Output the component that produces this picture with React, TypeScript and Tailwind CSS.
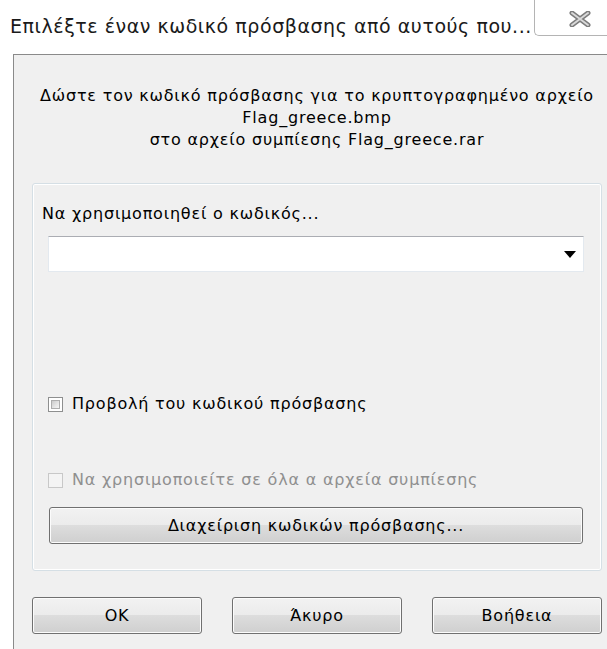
import React from 'react';

const ui = { fontFamily: '"DejaVu Sans", "Liberation Sans", sans-serif' };

const btnFace =
  'border border-[#707070] rounded-[3px] bg-[linear-gradient(to_bottom,#f2f2f2_0%,#ebebeb_50%,#dddddd_50%,#cfcfcf_100%)] shadow-[inset_0_0_0_1px_#fcfcfc] text-[16px] tracking-[0.8px] text-black flex items-center justify-center';

function CloseTab() {
  return (
    <div className="w-[73px] h-[36px] border-l border-b border-[#b4b4b4] rounded-bl-[5px] bg-white flex items-center justify-start pl-[34px] pt-[2px]">
      <svg width="22" height="16" viewBox="0 0 22 16">
        <path d="M3 2 L19 14 M19 2 L3 14" stroke="#7d7d7d" strokeWidth="5" strokeLinecap="round" />
        <path d="M3 2 L19 14 M19 2 L3 14" stroke="#d9d9d9" strokeWidth="2" strokeLinecap="round" />
      </svg>
    </div>
  );
}

function Checkbox({ label, disabled }: { label: string; disabled?: boolean }) {
  return (
    <div className="flex items-center h-[20px] ml-[15px]">
      <div
        className={`w-[15px] h-[15px] shrink-0 border p-[2px] ${
          disabled ? 'border-[#c8c8c8] bg-[#f4f4f4]' : 'border-[#8e8f8f] bg-white'
        }`}
      >
        <div
          className={`w-full h-full ${
            disabled ? 'bg-[#f4f4f4]' : 'bg-[linear-gradient(135deg,#cbcbcb_0%,#e6e6e6_60%,#f4f4f4_100%)] border border-[#aeaeae]'
          }`}
        />
      </div>
      <span
        className={`ml-[9px] text-[16px] tracking-[0.8px] leading-[20px] whitespace-nowrap ${
          disabled ? 'text-[#8f8f8f]' : 'text-black'
        }`}
      >
        {label}
      </span>
    </div>
  );
}

export default function App() {
  return (
    <div className="w-[607px] h-[649px] bg-white overflow-hidden flex flex-col" style={ui}>
      {/* title bar */}
      <div className="h-[54px] shrink-0 flex items-start justify-between">
        <div className="pl-[10px] pt-[14px] text-[19px] tracking-[0.55px] leading-[24px] text-[#1a1a1a] whitespace-nowrap">
          Επιλέξτε έναν κωδικό πρόσβασης από αυτούς που...
        </div>
        <CloseTab />
      </div>

      {/* dialog body */}
      <div className="flex-1 shrink-0 ml-[13px] border-l border-t border-[#8a8a8a] bg-[#f0f0f0] pl-[18px] pr-[5px] flex flex-col">
        <div className="mt-[30px] text-center text-[16px] tracking-[0.8px] leading-[22px] text-black whitespace-nowrap">
          <p>Δώστε τον κωδικό πρόσβασης για το κρυπτογραφημένο αρχείο</p>
          <p>Flag_greece.bmp</p>
          <p>στο αρχείο συμπίεσης Flag_greece.rar</p>
        </div>

        <div className="mt-[32px] h-[388px] shrink-0 border border-[#d5dfe5] rounded-[3px] shadow-[inset_0_0_0_1px_#ffffff] flex flex-col">
          <div className="mt-[20px] ml-[9px] text-[16px] tracking-[0.8px] leading-[20px] text-black">
            Να χρησιμοποιηθεί ο κωδικός...
          </div>
          <div className="mt-[12px] ml-[15px] w-[536px] h-[36px] bg-white border border-[#e3e9ef] border-t-[#abadb3] flex items-center justify-end pr-[7px]">
            <svg width="12" height="7" viewBox="0 0 12 7">
              <path d="M0 0 H12 L6 7 Z" fill="#000" />
            </svg>
          </div>
          <div className="mt-[122px]">
            <Checkbox label="Προβολή του κωδικού πρόσβασης" />
          </div>
          <div className="mt-[56px]">
            <Checkbox label="Να χρησιμοποιείτε σε όλα α αρχεία συμπίεσης" disabled />
          </div>
          <button className={`mt-[17px] ml-[16px] w-[534px] h-[37px] ${btnFace}`}>Διαχείριση κωδικών πρόσβασης...</button>
        </div>

        <div className="mt-[26px] shrink-0 flex gap-[30px]">
          <button className={`w-[170px] h-[37px] ${btnFace}`}>OK</button>
          <button className={`w-[170px] h-[37px] ${btnFace}`}>Άκυρο</button>
          <button className={`w-[170px] h-[37px] ${btnFace}`}>Βοήθεια</button>
        </div>
      </div>
    </div>
  );
}
